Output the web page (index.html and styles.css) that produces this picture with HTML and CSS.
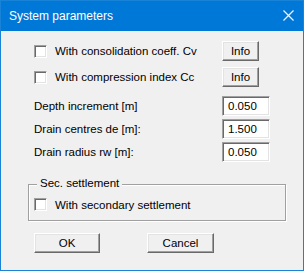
FILE: index.html
```html
<!DOCTYPE html>
<html>
<head>
<meta charset="utf-8">
<link rel="stylesheet" href="styles.css">
</head>
<body>
<div class="window">
  <div class="titlebar">
    <span class="title">System parameters</span>
    <svg class="close" width="11" height="11" viewBox="0 0 11 11"><path d="M0.5 0.5 L10.5 10.5 M10.5 0.5 L0.5 10.5" stroke="#fff" stroke-width="1.1" fill="none"/></svg>
  </div>
  <div class="client">
    <div class="row check-row first">
      <label class="check"><span class="box"></span><span>With consolidation coeff. Cv</span></label>
      <button class="btn info">Info</button>
    </div>
    <div class="row check-row second">
      <label class="check"><span class="box"></span><span>With compression index Cc</span></label>
      <button class="btn info">Info</button>
    </div>
    <div class="row field-row f1">
      <span>Depth increment [m]</span>
      <span class="input">0.050</span>
    </div>
    <div class="row field-row f2">
      <span>Drain centres de [m]:</span>
      <span class="input">1.500</span>
    </div>
    <div class="row field-row f2">
      <span>Drain radius rw [m]:</span>
      <span class="input">0.050</span>
    </div>
    <div class="group">
      <span class="legend">Sec. settlement</span>
      <label class="check"><span class="box"></span><span>With secondary settlement</span></label>
    </div>
    <div class="buttons">
      <button class="btn ok">OK</button>
      <button class="btn cancel">Cancel</button>
    </div>
  </div>
</div>
</body>
</html>
```
FILE: styles.css
```css
html, body {
  margin: 0;
  padding: 0;
  background: #f0f0f0;
}
body {
  font-family: "Liberation Sans", Arial, sans-serif;
  font-size: 11.5px;
  color: #000;
}
.window {
  width: 304px;
  height: 271px;
  box-sizing: border-box;
  border: 1px solid #1883d7;
  background: #f0f0f0;
  display: flex;
  flex-direction: column;
}
.titlebar {
  height: 30px;
  flex: none;
  background: #0078d7;
  display: flex;
  align-items: center;
  padding-left: 8px;
  padding-right: 9px;
  color: #fff;
}
.title {
  font-size: 12px;
  flex: 1;
  padding-bottom: 1px;
}
.close {
  display: block;
  margin-top: -1px;
}
.client {
  display: flex;
  flex-direction: column;
  padding-left: 33px;
}
.row {
  display: flex;
  align-items: center;
  height: 20px;
}
.check-row {
  width: 225px;
  justify-content: space-between;
}
.first { margin-top: 10px; }
.second { margin-top: 6px; }
.field-row {
  width: 236px;
  justify-content: space-between;
}
.f1 { margin-top: 9px; }
.f2 { margin-top: 3px; }
.check {
  display: flex;
  align-items: center;
  gap: 8px;
}
.box {
  width: 13px;
  height: 13px;
  box-sizing: border-box;
  background: #fff;
  border: 1px solid;
  border-color: #a0a0a0 #fff #fff #a0a0a0;
  box-shadow: inset 1px 1px 0 #696969, inset -1px -1px 0 #e3e3e3;
}
.btn {
  font-family: "Liberation Sans", Arial, sans-serif;
  font-size: 11.5px;
  color: #000;
  background: #f0f0f0;
  box-sizing: border-box;
  height: 20px;
  padding: 0;
  border: 1px solid;
  border-color: #fff #696969 #696969 #fff;
  box-shadow: inset -1px -1px 0 #a0a0a0, inset 1px 1px 0 #e3e3e3;
}
.info { width: 37px; }
.input {
  width: 48px;
  height: 20px;
  box-sizing: border-box;
  background: #fff;
  border: 1px solid;
  border-color: #a0a0a0 #fff #fff #a0a0a0;
  box-shadow: inset 1px 1px 0 #696969, inset -1px -1px 0 #e3e3e3;
  padding-left: 5px;
  display: flex;
  align-items: center;
}
.group {
  position: relative;
  margin-top: 22px;
  margin-left: -6px;
  width: 258px;
  height: 37px;
  box-sizing: border-box;
  border: 1px solid #a0a0a0;
  box-shadow: inset 1px 1px 0 #fff, 1px 1px 0 #fff;
  padding: 13px 0 0 5px;
}
.legend {
  position: absolute;
  top: -8px;
  left: 8px;
  padding: 0 3px;
  background: #f0f0f0;
}
.buttons {
  display: flex;
  margin-top: 12px;
  gap: 47px;
}
.ok { width: 66px; }
.cancel { width: 67px; }
```
